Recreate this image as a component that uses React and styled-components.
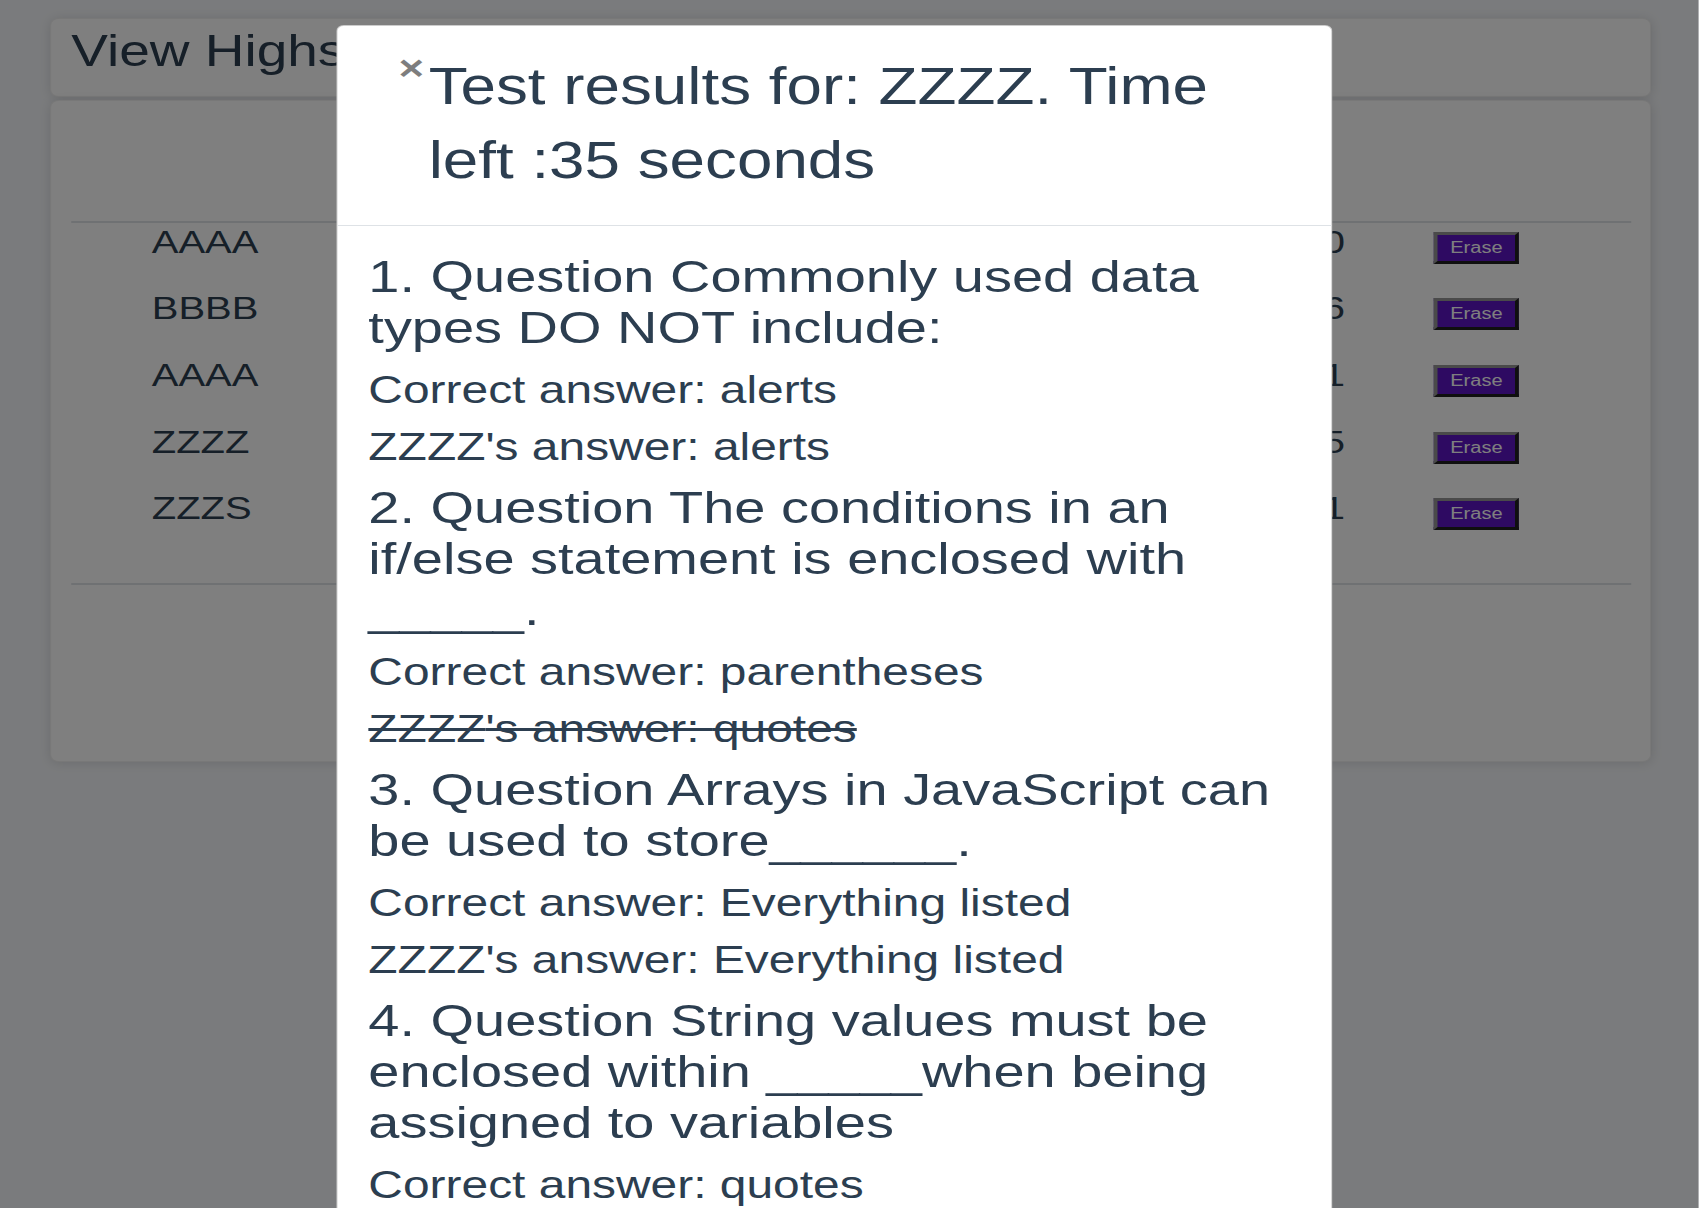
import React from 'react';
import styled, { createGlobalStyle } from 'styled-components';

const GlobalStyle = createGlobalStyle`
  html, body {
    margin: 0;
    padding: 0;
    overflow: hidden;
    background: #f5f7fa;
  }
  body {
    font-family: "Liberation Sans", Arial, Helvetica, sans-serif;
    color: #2c3e50;
  }
  *, *::before, *::after {
    box-sizing: border-box;
  }
`;

// the capture is stretched 1.25x in width, so lay out at 1359px and stretch it back
const Stage = styled.div`
  position: relative;
  width: 1359.2px;
  height: 100vh;
  overflow: hidden;
  transform: scaleX(1.25);
  transform-origin: 0 0;
`;

const Page = styled.main`
  display: flex;
  flex-direction: column;
  gap: 3px;
  padding: 18px 38.4px 0 40px;
`;

const Card = styled.section`
  background: #fff;
  border: 1px solid rgba(0, 0, 0, 0.06);
  border-radius: 7px;
  box-shadow: 0 1px 10px rgba(0, 0, 0, 0.12);
`;

const HeaderCard = styled(Card)`
  padding: 6px 16px 18px;
`;

const PageTitle = styled.h1`
  margin: 0;
  font-size: 44px;
  font-weight: 400;
  line-height: 52.8px;
  color: #2c3e50;
  white-space: nowrap;
`;

const BoardCard = styled(Card)`
  padding: 120px 15.2px 176px 16px;
`;

const Board = styled.div`
  border-top: 2px solid #dee2e6;
  border-bottom: 2px solid #dee2e6;
  padding-bottom: 26.7px;
`;

const Row = styled.div`
  display: grid;
  grid-template-columns: 214px 1fr 228.6px;
  align-items: baseline;
  height: 66.67px;
  font-size: 32px;
  line-height: 38px;
  color: #2c3e50;
`;

const NameCell = styled.div`
  padding-left: 64.4px;
`;

const ScoreCell = styled.div`
  text-align: right;
`;

const ActionCell = styled.div`
  padding-left: 71.2px;
`;

const EraseButton = styled.button`
  font-family: "Liberation Sans", Arial, sans-serif;
  font-size: 16px;
  line-height: normal;
  color: #fff;
  background: #5c14c4;
  border: 3px solid;
  border-color: #949494 #1e1e1e #1e1e1e #949494;
  padding: 4px 10px;
  cursor: pointer;
`;

const Backdrop = styled.div`
  position: absolute;
  inset: 0;
  display: flex;
  justify-content: center;
  align-items: flex-start;
  padding: 25px 24.8px 0 0;
  background: rgba(0, 0, 0, 0.5);
`;

const Dialog = styled.div`
  flex-shrink: 0;
  width: 797px;
  background: #fff;
  border: 1px solid rgba(0, 0, 0, 0.2);
  border-radius: 6px;
`;

const DialogHeader = styled.header`
  display: flex;
  align-items: flex-start;
  padding: 24px 59px 27px 49.2px;
  border-bottom: 1px solid #dee2e6;
`;

const CloseButton = styled.button`
  flex-shrink: 0;
  padding: 0;
  border: 0;
  background: transparent;
  font-family: "Liberation Sans", Arial, sans-serif;
  font-size: 35px;
  font-weight: 700;
  line-height: 1;
  color: #000;
  opacity: 0.5;
  text-shadow: 0 1px 0 #fff;
  cursor: pointer;
`;

const DialogTitle = styled.h2`
  margin: 0 0 0 3.6px;
  font-size: 51px;
  font-weight: 400;
  line-height: 74px;
  color: #2c3e50;
`;

const DialogBody = styled.div`
  padding: 25.4px 25px 0;
`;

const QuestionBlock = styled.div`
  margin-bottom: 7px;
`;

const Question = styled.h3`
  margin: 0 0 8px;
  font-size: 44.75px;
  font-weight: 400;
  line-height: 51px;
  color: #2c3e50;
`;

const Answer = styled.p`
  margin: 0;
  font-size: 38.35px;
  line-height: 57px;
  color: #2c3e50;
  text-decoration: ${(p) => (p.$wrong ? 'line-through' : 'none')};
`;

const scores = [
  { name: 'AAAA', score: 50 },
  { name: 'BBBB', score: 46 },
  { name: 'AAAA', score: 41 },
  { name: 'ZZZZ', score: 35 },
  { name: 'ZZZS', score: 31 },
];

const player = 'ZZZZ';

const results = [
  {
    question: 'Commonly used data types DO NOT include:',
    correct: 'alerts',
    given: 'alerts',
  },
  {
    question: 'The conditions in an if/else statement is enclosed with _____.',
    correct: 'parentheses',
    given: 'quotes',
  },
  {
    question: 'Arrays in JavaScript can be used to store______.',
    correct: 'Everything listed',
    given: 'Everything listed',
  },
  {
    question: 'String values must be enclosed within _____when being assigned to variables',
    correct: 'quotes',
    given: 'quotes',
  },
];

const App = () => {
  return (
    <Stage>
      <GlobalStyle />
      <Page>
        <HeaderCard>
          <PageTitle>View Highscores</PageTitle>
        </HeaderCard>
        <BoardCard>
          <Board>
            {scores.map((entry, i) => (
              <Row key={i}>
                <NameCell>{entry.name}</NameCell>
                <ScoreCell>{entry.score}</ScoreCell>
                <ActionCell>
                  <EraseButton type="button">Erase</EraseButton>
                </ActionCell>
              </Row>
            ))}
          </Board>
        </BoardCard>
      </Page>

      <Backdrop>
        <Dialog role="dialog">
          <DialogHeader>
            <CloseButton type="button" aria-label="Close">×</CloseButton>
            <DialogTitle>Test results for: {player}. Time left :35 seconds</DialogTitle>
          </DialogHeader>
          <DialogBody>
            {results.map((r, i) => (
              <QuestionBlock key={i}>
                <Question>{i + 1}. Question {r.question}</Question>
                <Answer>Correct answer: {r.correct}</Answer>
                <Answer $wrong={r.given !== r.correct}>
                  {player}'s answer: {r.given}
                </Answer>
              </QuestionBlock>
            ))}
          </DialogBody>
        </Dialog>
      </Backdrop>
    </Stage>
  );
};

export default App;
